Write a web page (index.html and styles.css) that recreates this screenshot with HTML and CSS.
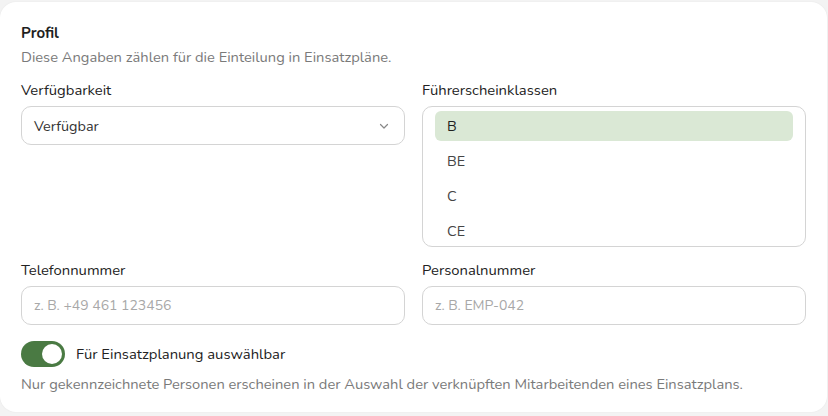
FILE: index.html
```html
<!DOCTYPE html>
<html lang="de">
<head>
<meta charset="utf-8">
<title>Profil</title>
<link rel="stylesheet" href="styles.css">
</head>
<body>
<section class="card">
  <h2 class="title">Profil</h2>
  <p class="subtitle">Diese Angaben zählen für die Einteilung in Einsatzpläne.</p>
  <div class="grid">
    <div class="field">
      <label class="label">Verfügbarkeit</label>
      <div class="select">
        <span>Verfügbar</span>
        <svg class="chev" width="12" height="12" viewBox="0 0 12 12"><path d="M2.5 4.5 L6 8 L9.5 4.5" fill="none" stroke="#888" stroke-width="1.2" stroke-linecap="round" stroke-linejoin="round"/></svg>
      </div>
    </div>
    <div class="field">
      <label class="label">Führerscheinklassen</label>
      <div class="listbox">
        <div class="opt selected">B</div>
        <div class="opt">BE</div>
        <div class="opt">C</div>
        <div class="opt">CE</div>
      </div>
    </div>
    <div class="field">
      <label class="label">Telefonnummer</label>
      <div class="input placeholder">z. B. +49 461 123456</div>
    </div>
    <div class="field">
      <label class="label">Personalnummer</label>
      <div class="input placeholder">z. B. EMP-042</div>
    </div>
  </div>
  <div class="toggle-row">
    <span class="switch"><span class="knob"></span></span>
    <span class="toggle-label">Für Einsatzplanung auswählbar</span>
  </div>
  <p class="help">Nur gekennzeichnete Personen erscheinen in der Auswahl der verknüpften Mitarbeitenden eines Einsatzplans.</p>
</section>
</body>
</html>
```
FILE: styles.css
```css
* { box-sizing: border-box; }
html, body {
  margin: 0;
  padding: 0;
  background: #f3f3f3;
  font-family: "Nunito", "Lato", "Noto Sans", sans-serif;
}
body { height: 416px; overflow: hidden; }
.card {
  margin-top: 2px;
  width: 827px;
  height: 410px;
  background: #fff;
  border-radius: 16px;
  padding: 21px 21px 0 21px;
  box-shadow: 0 0 2px rgba(0,0,0,0.06);
}
.title {
  margin: 0;
  font-size: 15px;
  line-height: 20px;
  font-weight: 700;
  color: #1f1f1f;
}
.subtitle {
  margin: 4px 0 0;
  font-size: 14.7px;
  line-height: 20px;
  color: #7a7a7a;
}
.grid {
  margin-top: 13px;
  display: grid;
  grid-template-columns: 1fr 1fr;
  column-gap: 17px;
  row-gap: 13px;
}
.field { display: flex; flex-direction: column; }
.label {
  font-size: 14.8px;
  line-height: 20px;
  color: #222;
  margin-bottom: 6px;
}
.select, .input {
  height: 39px;
  border: 1px solid #d4d4d4;
  border-radius: 10px;
  display: flex;
  align-items: center;
  padding: 0 12px;
  font-size: 14.4px;
  color: #333;
}
.input { font-size: 14px; }
.select { justify-content: space-between; }
.chev { margin-right: 2px; }
.placeholder { color: #a8a8a8; }
.listbox {
  height: 141px;
  border: 1px solid #d4d4d4;
  border-radius: 10px;
  padding: 4px 12px 0;
  overflow: hidden;
}
.opt {
  height: 30px;
  margin-bottom: 5px;
  padding: 0 12px;
  border-radius: 6px;
  display: flex;
  align-items: center;
  font-size: 14.4px;
  color: #444;
}
.opt.selected { background: #dae8d5; color: #1f1f1f; }
.toggle-row {
  margin-top: 16px;
  display: flex;
  align-items: center;
  gap: 11px;
}
.switch {
  width: 44px;
  height: 26px;
  border-radius: 13px;
  background: #4a7a43;
  display: flex;
  align-items: center;
  justify-content: flex-end;
  padding: 0 3px;
}
.knob {
  width: 20px;
  height: 20px;
  border-radius: 50%;
  background: #fff;
}
.toggle-label {
  font-size: 14.8px;
  color: #222;
}
.help {
  margin: 7px 0 0;
  font-size: 14.7px;
  line-height: 20px;
  color: #7a7a7a;
}
```
